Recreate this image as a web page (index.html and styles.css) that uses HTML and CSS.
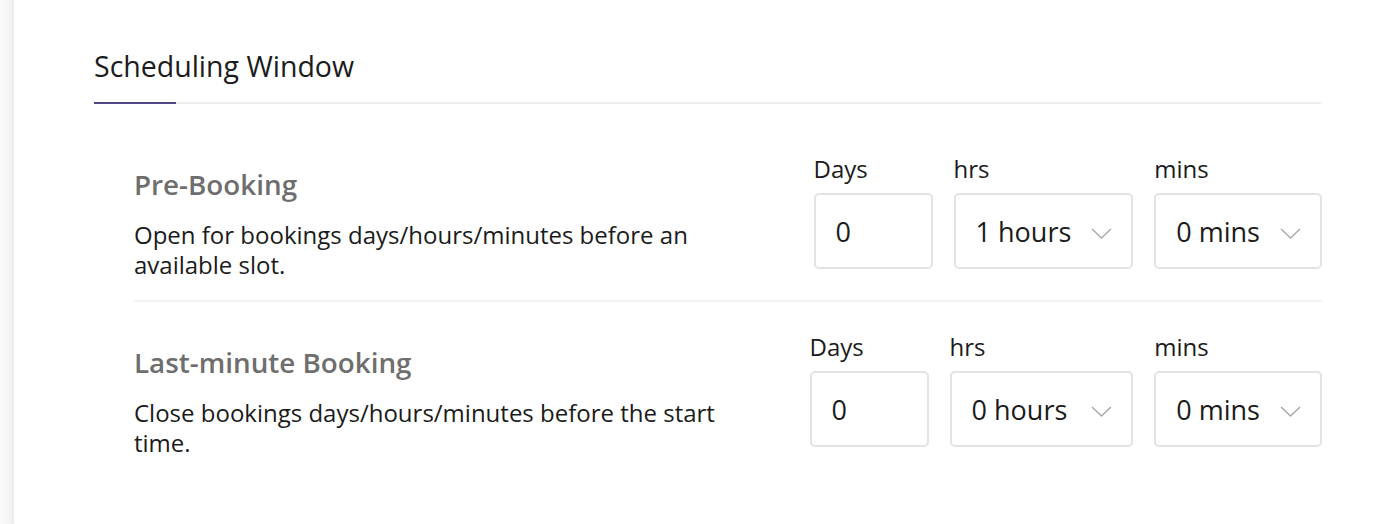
FILE: index.html
```html
<!DOCTYPE html>
<html>
<head>
<meta charset="utf-8">
<link rel="stylesheet" href="styles.css">
</head>
<body>
<div class="page">
  <div class="edge"></div>
  <div class="card">
    <div class="tabs">
      <div class="tab">Scheduling Window</div>
    </div>
    <div class="rows">
      <div class="row first">
        <div class="info">
          <div class="heading">Pre-Booking</div>
          <div class="desc">Open for bookings days/hours/minutes before an available slot.</div>
        </div>
        <div class="fields">
          <div class="field">
            <div class="label">Days</div>
            <div class="box input">0</div>
          </div>
          <div class="field">
            <div class="label">hrs</div>
            <div class="box select"><span>1 hours</span><svg class="chev" width="21" height="11" viewBox="0 0 21 11"><path d="M1 1 L10.5 10 L20 1" fill="none" stroke="#a8a8a8" stroke-width="1.4"/></svg></div>
          </div>
          <div class="field">
            <div class="label">mins</div>
            <div class="box select"><span>0 mins</span><svg class="chev" width="21" height="11" viewBox="0 0 21 11"><path d="M1 1 L10.5 10 L20 1" fill="none" stroke="#a8a8a8" stroke-width="1.4"/></svg></div>
          </div>
        </div>
      </div>
      <div class="row second">
        <div class="info">
          <div class="heading">Last-minute Booking</div>
          <div class="desc">Close bookings days/hours/minutes before the start time.</div>
        </div>
        <div class="fields">
          <div class="field">
            <div class="label">Days</div>
            <div class="box input">0</div>
          </div>
          <div class="field">
            <div class="label">hrs</div>
            <div class="box select wide"><span>0 hours</span><svg class="chev" width="21" height="11" viewBox="0 0 21 11"><path d="M1 1 L10.5 10 L20 1" fill="none" stroke="#a8a8a8" stroke-width="1.4"/></svg></div>
          </div>
          <div class="field">
            <div class="label">mins</div>
            <div class="box select"><span>0 mins</span><svg class="chev" width="21" height="11" viewBox="0 0 21 11"><path d="M1 1 L10.5 10 L20 1" fill="none" stroke="#a8a8a8" stroke-width="1.4"/></svg></div>
          </div>
        </div>
      </div>
    </div>
  </div>
</div>
</body>
</html>
```

FILE: styles.css
```css
* { box-sizing: border-box; }
html, body { margin: 0; padding: 0; background: #fff; }
body {
  font-family: "Open Sans", "Lato", sans-serif;
  color: #1b1b1b;
  width: 1374px;
  height: 524px;
  overflow: hidden;
}
.page {
  display: flex;
  height: 524px;
}
.edge {
  width: 14px;
  flex: none;
  background: linear-gradient(to right, #fbfbfb 0%, #f5f5f5 60%, #ebebeb 100%);
}
.card {
  flex: 1;
  padding: 49px 52px 0 80px;
}
.tabs {
  border-bottom: 2px solid #efefef;
  display: flex;
}
.tab {
  font-size: 28.5px;
  line-height: 34px;
  color: #1c1c1c;
  padding-bottom: 19px;
  position: relative;
}
.tab::after {
  content: "";
  position: absolute;
  left: 0;
  bottom: -2px;
  width: 82px;
  height: 2px;
  background: #4f4682;
}
.rows {
  padding-left: 40px;
}
.row {
  display: flex;
  justify-content: space-between;
}
.row.first {
  padding-top: 51px;
  padding-bottom: 20px;
  border-bottom: 2px solid #f3f3f3;
}
.row.second {
  padding-top: 31px;
}
.info {
  width: 610px;
  padding-top: 12px;
}
.heading {
  font-size: 27.8px;
  font-weight: 600;
  color: #6e6e6e;
  line-height: 34px;
}
.desc {
  margin-top: 19px;
  font-size: 24px;
  line-height: 30px;
}
.fields {
  display: flex;
  gap: 21px;
}
.field {
  display: flex;
  flex-direction: column;
}
.label {
  font-size: 24px;
  line-height: 28px;
  margin-bottom: 10px;
  color: #1b1b1b;
}
.box {
  height: 76px;
  border: 2px solid #e3e3e3;
  border-radius: 5px;
  display: flex;
  align-items: center;
  font-size: 27px;
  color: #1b1b1b;
}
.input {
  width: 119px;
  padding-left: 20px;
}
.select {
  padding: 0 19px 0 20px;
  gap: 20px;
}
.select.wide {
  gap: 24px;
}
.chev { display: block; margin-top: 4px; }
```
